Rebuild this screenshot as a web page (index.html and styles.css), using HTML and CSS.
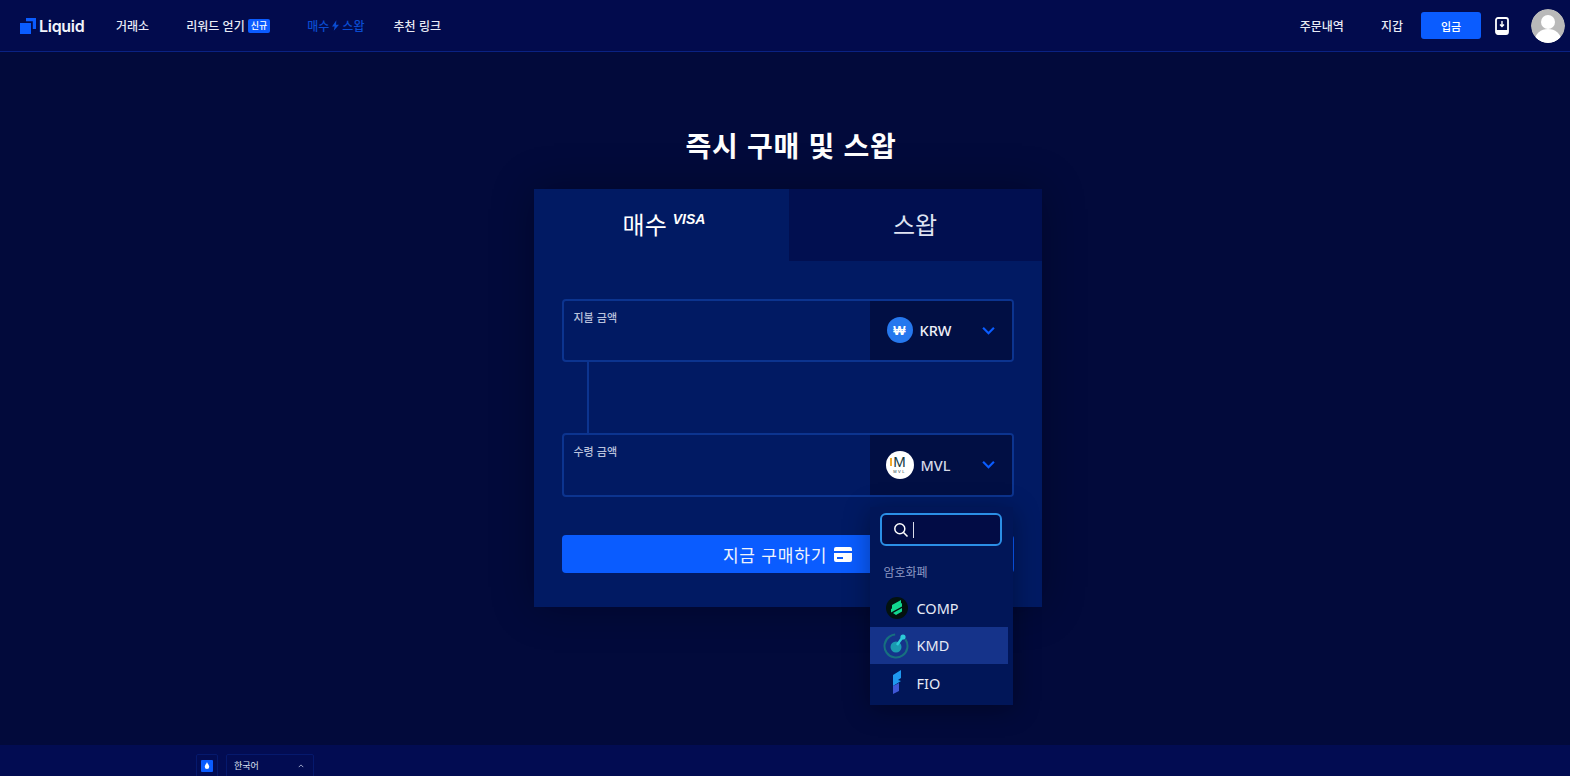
FILE: index.html
```html
<!DOCTYPE html>
<html lang="ko">
<head>
    <meta charset="UTF-8">
    <title>Liquid</title>
    <link rel="stylesheet" href="styles.css">
</head>
<body>
    <header class="topbar">
        <div class="logo">
            <svg class="logo-mark" viewBox="0 0 16 16" width="16" height="16">
                <path fill="#0a5cff" d="M6 0H16V11H12.800V3.200H6z"/>
                <path fill="#0a5cff" d="M0 5H11V16H0z"/>
            </svg>
            <span class="logo-text">Liquid</span>
        </div>
        <nav class="nav">
            <a class="nav-link nav-exchange">거래소</a>
            <a class="nav-link nav-rewards">리워드 얻기 <span class="badge">신규</span></a>
            <a class="nav-link nav-swap is-active">매수
                <svg viewBox="0 0 8 12" width="7" height="11"><path fill="#0a4bd0" d="M5 0 0 7h3l-1 5 6-7H4.600z"/></svg>
                스왑</a>
            <a class="nav-link nav-refer">추천 링크</a>
        </nav>
        <div class="topbar-right">
            <a class="nav-link nav-orders">주문내역</a>
            <a class="nav-link nav-wallet">지갑</a>
            <button class="deposit-btn">입금</button>
            <svg class="phone-icon" viewBox="0 0 14 18" width="14" height="18">
                <rect x="1" y="1" width="12" height="16" rx="2" fill="none" stroke="#fff" stroke-width="1.800"/>
                <rect x="1" y="13" width="12" height="4" fill="#fff"/>
                <path d="M7 4v5M5 7.500l2 2 2-2" fill="none" stroke="#fff" stroke-width="1.400"/>
            </svg>
            <svg class="avatar" viewBox="0 0 34 34" width="34" height="34">
                <defs><clipPath id="avatar-clip"><circle cx="17" cy="17" r="17"/></clipPath></defs>
                <g clip-path="url(#avatar-clip)">
                    <rect width="34" height="34" fill="#b9b9b9"/>
                    <circle cx="17" cy="13" r="7" fill="#fff"/>
                    <ellipse cx="17" cy="31" rx="13" ry="11" fill="#fff"/>
                </g>
            </svg>
        </div>
    </header>

    <main class="content">
        <h1 class="page-title">즉시 구매 및 스왑</h1>
        <section class="card">
            <div class="tabs">
                <div class="tab is-active">매수 <span class="visa">VISA</span></div>
                <div class="tab">스왑</div>
            </div>
            <div class="card-body">
                <div class="field">
                    <div class="field-input"><span class="field-label">지불 금액</span></div>
                    <div class="field-select">
                        <span class="coin coin-krw">₩</span>
                        <span class="coin-name">KRW</span>
                        <svg class="chevron" viewBox="0 0 12 8" width="13" height="9"><path d="M1 1.500l5 5 5-5" fill="none" stroke="#0a5cff" stroke-width="2"/></svg>
                    </div>
                </div>
                <div class="connector"></div>
                <div class="field field-receive">
                    <div class="field-input"><span class="field-label">수령 금액</span></div>
                    <div class="field-select">
                        <span class="coin coin-mvl">
                            <span class="mvl-m"><i class="mvl-dots"></i>M</span>
                            <span class="mvl-text">MVL</span>
                        </span>
                        <span class="coin-name coin-name-dim">MVL</span>
                        <svg class="chevron" viewBox="0 0 12 8" width="13" height="9"><path d="M1 1.500l5 5 5-5" fill="none" stroke="#0a5cff" stroke-width="2"/></svg>
                    </div>
                    <div class="dropdown">
                        <div class="search-box">
                            <svg viewBox="0 0 16 16" width="16" height="16"><circle cx="6.800" cy="6.800" r="5" fill="none" stroke="#fff" stroke-width="1.500"/><path d="M10.500 10.500l4 4" stroke="#fff" stroke-width="1.600"/></svg>
                            <span class="caret"></span>
                        </div>
                        <div class="dropdown-label">암호화폐</div>
                        <ul class="coin-list">
                            <li class="coin-item">
                                <svg class="coin-icon" viewBox="0 0 28 28" width="28" height="28">
                                    <circle cx="14" cy="14" r="11" fill="#03120f"/>
                                    <path fill="#12d88f" d="M9 11l9-5v3.500l-9 5zM8 15l11-6v3.500L8 18.500zM10 19l9-5v3.500L13 21z"/>
                                </svg>
                                <span>COMP</span>
                            </li>
                            <li class="coin-item is-hover">
                                <svg class="coin-icon" viewBox="0 0 28 28" width="28" height="28">
                                    <circle cx="13" cy="15" r="11.500" fill="none" stroke="#17707f" stroke-width="2" stroke-dasharray="60 13" transform="rotate(-35 13 15)"/>
                                    <circle cx="13" cy="16" r="5.500" fill="#1a9bb0"/>
                                    <path d="M14 14l5-7" stroke="#2ccbd8" stroke-width="2.400"/>
                                    <circle cx="20" cy="6" r="2.600" fill="#2ccbd8"/>
                                </svg>
                                <span>KMD</span>
                            </li>
                            <li class="coin-item">
                                <svg class="coin-icon" viewBox="0 0 28 28" width="28" height="28">
                                    <path fill="#1f98ee" d="M10 6l8-5v8l-3 2 3 1-8 5z"/>
                                    <path fill="#3f57d6" d="M10 17l6-3v8l-6 3z"/>
                                </svg>
                                <span>FIO</span>
                            </li>
                        </ul>
                    </div>
                </div>
                <button class="buy-btn">지금 구매하기
                    <svg viewBox="0 0 18 15" width="18" height="15">
                        <path fill="#fff" d="M2 0h14a2 2 0 0 1 2 2v2H0V2a2 2 0 0 1 2-2zM0 6h18v7a2 2 0 0 1-2 2H2a2 2 0 0 1-2-2zm3 4v2h6v-2z"/>
                    </svg>
                </button>
            </div>
        </section>
    </main>

    <footer class="footer">
        <div class="drop-box">
            <span class="drop-inner">
                <svg viewBox="0 0 8 10" width="6" height="8"><path fill="#fff" d="M4 0c1 2 3 4 3 6a3 3 0 0 1-6 0c0-2 2-4 3-6z"/></svg>
            </span>
        </div>
        <div class="lang-box">
            <span>한국어</span>
            <svg viewBox="0 0 8 5" width="6" height="4"><path d="M1 4l3-3 3 3" fill="none" stroke="#cfd6ee" stroke-width="1"/></svg>
        </div>
    </footer>
</body>
</html>
```

FILE: styles.css
```css
* {
    box-sizing: border-box;
}

body {
    margin: 0;
    height: 100vh;
    overflow: hidden;
    display: flex;
    flex-direction: column;
    background-color: #020a3b;
    color: white;
    font-family: "Noto Sans CJK KR", "Noto Sans", sans-serif;
}

/* top bar */
.topbar {
    height: 52px;
    flex-shrink: 0;
    display: flex;
    align-items: center;
    padding: 0 5px 0 20px;
    background-color: #020b4d;
    border-bottom: 1px solid #0a2283;
}

.logo {
    display: flex;
    align-items: center;
    gap: 3px;
    width: 96px;
}

.logo-text {
    font-family: Inter, sans-serif;
    font-size: 16px;
    font-weight: 600;
    letter-spacing: -0.3px;
    color: #f2f4fb;
}

.nav {
    display: flex;
    align-items: center;
}

.nav-link {
    font-size: 12px;
    font-weight: 500;
    color: #e8eaf4;
    white-space: nowrap;
}

.nav-exchange { margin-right: 37px; }
.nav-rewards { margin-right: 37px; display: flex; align-items: center; gap: 3px; }
.nav-swap { margin-right: 29px; display: flex; align-items: center; gap: 3px; }

.nav-link.is-active {
    color: #0a4bd0;
}

.badge {
    background-color: #0b5cff;
    color: white;
    font-size: 9px;
    line-height: 14px;
    padding: 0 3px;
    border-radius: 2px;
}

.topbar-right {
    margin-left: auto;
    display: flex;
    align-items: center;
}

.nav-orders { margin-right: 37px; }
.nav-wallet { margin-right: 18px; }

.deposit-btn {
    width: 60px;
    height: 27px;
    border: none;
    border-radius: 3px;
    background-color: #0a5cff;
    color: white;
    font-family: inherit;
    font-size: 11px;
    font-weight: 500;
}

.phone-icon {
    margin-left: 14px;
}

.avatar {
    margin-left: 22px;
    border-radius: 50%;
}

/* main, the whole column sits a little right of the window centre */
.content {
    flex: 1;
    display: flex;
    flex-direction: column;
    align-items: center;
    padding-left: 5px;
}

.page-title {
    margin: 72px 0 23px 7px;
    font-size: 28px;
    font-weight: 700;
    line-height: 42px;
    letter-spacing: 0.7px;
}

.card {
    width: 508px;
    background-color: #011a63;
    box-shadow: 0 0 40px rgba(0, 0, 0, 0.3);
}

.tabs {
    display: flex;
    height: 72px;
}

.tab {
    flex: 1;
    display: flex;
    justify-content: center;
    align-items: center;
    gap: 6px;
    padding-bottom: 3px;
    font-size: 24px;
    background-color: #010f50;
    color: #dfe3f2;
}

.tab.is-active {
    flex: 0 0 255px;
    padding-left: 6px;
    background-color: #011a63;
    color: white;
}

.visa {
    font-family: "Liberation Sans", sans-serif;
    font-size: 14px;
    font-weight: 700;
    font-style: italic;
    margin-bottom: 10px;
}

.card-body {
    padding: 38px 28px 34px;
}

.field {
    position: relative;
    height: 63px;
    display: flex;
    border: 2px solid #0c348f;
    border-radius: 4px;
}

.field-receive {
    height: 64px;
}

.field-input {
    flex: 1;
    padding: 8px 10px;
}

.field-label {
    font-size: 11px;
    font-weight: 500;
    line-height: 16px;
    display: block;
    color: #b9c2dd;
}

.field-select {
    width: 142px;
    display: flex;
    align-items: center;
    padding-left: 17px;
    padding-bottom: 1px;
    background-color: #010f44;
    border-radius: 0 2px 2px 0;
}

.coin {
    width: 26px;
    height: 26px;
    flex-shrink: 0;
    border-radius: 50%;
    display: flex;
    flex-direction: column;
    align-items: center;
    justify-content: center;
}

.coin-krw {
    background-color: #2678ee;
    font-family: "Liberation Sans", sans-serif;
    font-size: 13px;
    font-weight: 700;
}

.coin-mvl {
    width: 28px;
    height: 28px;
    margin-left: -1px;
    background-color: white;
    color: #143b42;
}

.mvl-m {
    position: relative;
    font-family: "Liberation Sans", sans-serif;
    font-size: 15px;
    line-height: 14px;
}

.mvl-dots {
    position: absolute;
    left: -3px;
    top: 3px;
    width: 2px;
    height: 8px;
    background-color: #f0a92e;
}

.mvl-text {
    font-family: "Liberation Sans", sans-serif;
    font-size: 4px;
    line-height: 5px;
    letter-spacing: 1.500px;
}

.coin-name {
    margin-left: 7px;
    font-family: "Noto Sans", sans-serif;
    font-size: 14.500px;
    font-weight: 500;
    color: #eef0f8;
}

.coin-name-dim {
    margin-left: 7px;
    color: #d5d8e6;
}

.chevron {
    margin-left: auto;
    margin-right: 17px;
}

.connector {
    width: 2px;
    height: 71px;
    margin-left: 25px;
    background-color: #0c348f;
}

/* dropdown over the receive field */
.dropdown {
    position: absolute;
    z-index: 2;
    top: 72px;
    right: -1px;
    width: 143px;
    height: 198px;
    padding-top: 6px;
    background-color: #011658;
    box-shadow: 0 4px 24px rgba(0, 0, 0, 0.35);
}

.search-box {
    width: 122px;
    height: 33px;
    margin-left: 10px;
    display: flex;
    align-items: center;
    gap: 4px;
    padding-left: 11px;
    background-color: #020c45;
    border: 2px solid #2b8fe6;
    border-radius: 6px;
}

.caret {
    width: 1px;
    height: 16px;
    background-color: #d9dcea;
}

.dropdown-label {
    margin: 17px 0 0 14px;
    font-size: 12px;
    line-height: 18px;
    color: #8e99c4;
}

.coin-list {
    list-style: none;
    margin: 8px 0 0;
    padding: 0;
}

.coin-item {
    height: 37.500px;
    width: 138px;
    display: flex;
    align-items: center;
    gap: 6px;
    padding-left: 13px;
    font-family: "Noto Sans", sans-serif;
    font-size: 14.500px;
    color: #e6e9f5;
}

.coin-icon {
    flex-shrink: 0;
}

.coin-item.is-hover {
    background-color: #15338a;
}

.buy-btn {
    width: 100%;
    height: 38px;
    margin-top: 38px;
    display: flex;
    justify-content: center;
    align-items: center;
    gap: 7px;
    border: none;
    border-radius: 4px;
    background-color: #0a5cff;
    color: #f0f3fc;
    font-family: inherit;
    font-size: 17px;
    letter-spacing: 0.8px;
}

/* footer */
.footer {
    height: 31px;
    flex-shrink: 0;
    display: flex;
    align-items: flex-start;
    gap: 8px;
    padding: 9px 0 0 196px;
    background-color: #020c52;
}

.drop-box {
    width: 22px;
    height: 30px;
    display: flex;
    justify-content: center;
    padding-top: 5px;
    border: 1px solid #05196d;
    border-radius: 2px;
}

.drop-inner {
    width: 12px;
    height: 12px;
    display: flex;
    align-items: center;
    justify-content: center;
    border-radius: 1px;
    background-color: #0a5cff;
}

.lang-box {
    width: 88px;
    height: 30px;
    display: flex;
    justify-content: space-between;
    align-items: flex-start;
    padding: 4px 9px 0 7px;
    border: 1px solid #05196d;
    border-radius: 2px;
    font-size: 9px;
    line-height: 13px;
    color: #dfe3f2;
}

.lang-box svg {
    margin-top: 5px;
}
```
